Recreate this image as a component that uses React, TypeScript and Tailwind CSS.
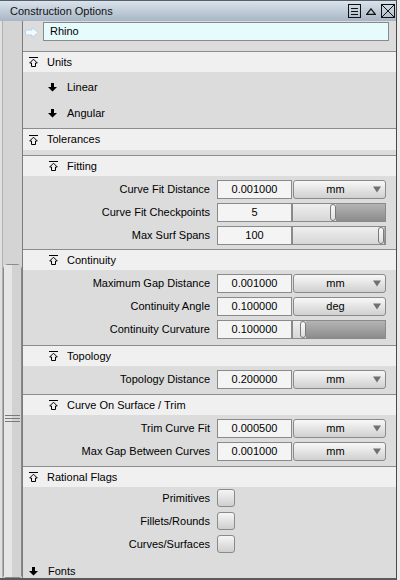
import React from "react";

function CollapseIcon() {
  return (
    <svg width="9" height="10" viewBox="0 0 9 10" className="shrink-0">
      <path d="M0 0.5H9" stroke="#000" />
      <path d="M4.5 2.2L8.3 6H6.5V9.5H2.5V6H0.7Z" fill="none" stroke="#000" />
    </svg>
  );
}

function ExpandIcon() {
  return (
    <svg width="9" height="9" viewBox="0 0 9 9" className="shrink-0">
      <path d="M3 0H6V4H9L4.5 8.5L0 4H3Z" fill="#000" />
    </svg>
  );
}

function Line() {
  return <div className="h-px bg-[#8c8c8c]" />;
}

function Header({ label, sub }: { label: string; sub?: boolean }) {
  return (
    <div
      className={
        "flex h-[20px] items-center gap-[9px] bg-[#f0f0f0] " +
        (sub ? "pl-[26px]" : "pl-[6px]")
      }
    >
      <CollapseIcon />
      <span>{label}</span>
    </div>
  );
}

function Row({ label, children }: { label: string; children: React.ReactNode }) {
  return (
    <div className="flex h-[19px] items-center">
      <div className="w-[187px] text-right">{label}</div>
      <div className="ml-[7px] flex h-full">{children}</div>
    </div>
  );
}

function NumField({ value }: { value: string }) {
  return (
    <div className="flex h-[19px] w-[75px] items-center justify-center border border-[#8a8a8a] bg-[#f4f4f4]">
      {value}
    </div>
  );
}

function Dropdown({ value }: { value: string }) {
  return (
    <div className="ml-[1px] flex h-[19px] w-[93px] items-center rounded-[3px] border border-[#8a8a8a] bg-linear-to-b from-[#f8f8f8] to-[#d0d0d0]">
      <span className="flex-1 pl-[4px] text-center">{value}</span>
      <svg width="8" height="7" viewBox="0 0 8 7" className="mr-[4px]">
        <path d="M0 0.5H8L4 6.5Z" fill="#707070" />
      </svg>
    </div>
  );
}

function Slider({ left }: { left: string }) {
  return (
    <div className="flex h-[19px] w-[94px] border border-[#8a8a8a]">
      <div className={left + " h-full bg-linear-to-b from-[#efefef] to-[#d6d6d6]"} />
      <div className="h-full w-[6px] rounded-[3px] border border-[#7a7a7a] bg-linear-to-b from-[#fafafa] to-[#dedede]" />
      <div className="h-full flex-1 bg-linear-to-b from-[#b4b4b4] to-[#8c8c8c]" />
    </div>
  );
}

function Check() {
  return (
    <div className="h-[18px] w-[18px] rounded-[3px] border border-[#8a8a8a] bg-linear-to-b from-[#f6f6f6] to-[#cfcfcf]" />
  );
}

function SubBody({ pb, children }: { pb: string; children: React.ReactNode }) {
  return <div className={"flex flex-col gap-[4px] pt-[4px] " + pb}>{children}</div>;
}

export default function App() {
  return (
    <div className="flex h-[580px] w-[400px] overflow-hidden bg-[#dcdcdc] font-['Liberation_Sans',Arial,sans-serif] text-[11px] text-black">
      <div className="flex w-[396px] flex-col">
        {/* title bar */}
        <div className="flex h-[21px] shrink-0 items-center border-t border-[#55606c] bg-linear-to-b from-[#dbe3eb] to-[#a7b6c6] pl-[10px] pr-[1px]">
          <span className="flex-1 text-[11px] text-[#111]">Construction Options</span>
          <svg width="13" height="14" viewBox="0 0 13 14" className="mr-[5px]">
            <rect x="0.5" y="0.5" width="12" height="13" fill="none" stroke="#111" />
            <path d="M3 4.5H10M3 7.5H10M3 10.5H10" stroke="#111" />
          </svg>
          <svg width="10" height="7" viewBox="0 0 10 7" className="mr-[5px]">
            <path d="M5 0.8L9.3 6.3H0.7Z" fill="none" stroke="#111" strokeWidth="1.2" />
          </svg>
          <svg width="14" height="14" viewBox="0 0 14 14">
            <rect x="0.5" y="0.5" width="13" height="13" fill="none" stroke="#111" />
            <path d="M1 1L13 13M13 1L1 13" stroke="#111" />
          </svg>
        </div>

        <div className="flex min-h-0 flex-1">
          {/* left scroll strip */}
          <div className="flex w-[22px] shrink-0 bg-[#d4d4d4]">
            <div className="w-[3px] border-r border-[#b0b0b0] bg-[#e0e0e0]" />
            <div className="flex flex-1 flex-col pt-[243px]">
              <div className="relative flex flex-1 rounded-t-[5px] rounded-b-[3px] border border-[#8a8a8a]">
                <div className="w-[8px] bg-[#e6e6e6]" />
                <div className="flex-1 bg-[#d2d2d2]" />
                <div className="absolute left-[1px] right-[1px] top-[150px] flex flex-col gap-[2px]">
                  <div className="h-px bg-[#7a7a7a]" />
                  <div className="h-px bg-[#7a7a7a]" />
                  <div className="h-px bg-[#7a7a7a]" />
                </div>
              </div>
            </div>
          </div>
          <div className="w-px shrink-0 bg-[#7c7c7c]" />

          {/* main content */}
          <div className="min-w-0 flex-1 overflow-hidden">
            <div className="flex h-[30px] items-start pl-[2px] pr-[7px] pt-[1px]">
              <svg width="14" height="11" viewBox="0 0 14 11" className="mt-[5px]">
                <path d="M0.5 3H7V0.5L13.3 5.5L7 10.5V8H0.5Z" fill="#f2faff" stroke="#b8d4ea" />
              </svg>
              <div className="ml-[4px] flex h-[19px] flex-1 items-center border border-[#8a8a8a] bg-[#e6fcfc] pl-[6px]">
                Rhino
              </div>
            </div>
            <Line />
            <Header label="Units" />
            <div className="flex flex-col pb-[2px] pt-[2px]">
              <div className="flex h-[26px] items-center gap-[10px] pl-[25px]">
                <ExpandIcon />
                <span>Linear</span>
              </div>
              <div className="flex h-[26px] items-center gap-[10px] pl-[25px]">
                <ExpandIcon />
                <span>Angular</span>
              </div>
            </div>
            <Line />
            <div className="flex h-[21px] items-center gap-[9px] bg-[#f0f0f0] pl-[6px]">
              <CollapseIcon />
              <span>Tolerances</span>
            </div>
            <div className="h-[5px]" />
            <Line />
            <Header label="Fitting" sub />
            <SubBody pb="pb-[4px]">
              <Row label="Curve Fit Distance">
                <NumField value="0.001000" />
                <Dropdown value="mm" />
              </Row>
              <Row label="Curve Fit Checkpoints">
                <NumField value="5" />
                <Slider left="w-[37px]" />
              </Row>
              <Row label="Max Surf Spans">
                <NumField value="100" />
                <Slider left="w-[85px]" />
              </Row>
            </SubBody>
            <Line />
            <Header label="Continuity" sub />
            <SubBody pb="pb-[6px]">
              <Row label="Maximum Gap Distance">
                <NumField value="0.001000" />
                <Dropdown value="mm" />
              </Row>
              <Row label="Continuity Angle">
                <NumField value="0.100000" />
                <Dropdown value="deg" />
              </Row>
              <Row label="Continuity Curvature">
                <NumField value="0.100000" />
                <Slider left="w-[7px]" />
              </Row>
            </SubBody>
            <Line />
            <Header label="Topology" sub />
            <SubBody pb="pb-[5px]">
              <Row label="Topology Distance">
                <NumField value="0.200000" />
                <Dropdown value="mm" />
              </Row>
            </SubBody>
            <Line />
            <Header label="Curve On Surface / Trim" sub />
            <SubBody pb="pb-[5px]">
              <Row label="Trim Curve Fit">
                <NumField value="0.000500" />
                <Dropdown value="mm" />
              </Row>
              <Row label="Max Gap Between Curves">
                <NumField value="0.001000" />
                <Dropdown value="mm" />
              </Row>
            </SubBody>
            <Line />
            <Header label="Rational Flags" />
            <div className="flex flex-col gap-[4px] pt-[2px]">
              <Row label="Primitives">
                <Check />
              </Row>
              <Row label="Fillets/Rounds">
                <Check />
              </Row>
              <Row label="Curves/Surfaces">
                <Check />
              </Row>
            </div>
            <div className="mt-[10px] flex h-[14px] items-center gap-[10px] pl-[6px]">
              <ExpandIcon />
              <span>Fonts</span>
            </div>
          </div>
        </div>
        <div className="h-[2px] shrink-0 bg-[#5a5a5a]" />
      </div>
      <div className="w-[4px] border-l border-[#4a4a4a] bg-[#ececec]" />
    </div>
  );
}
